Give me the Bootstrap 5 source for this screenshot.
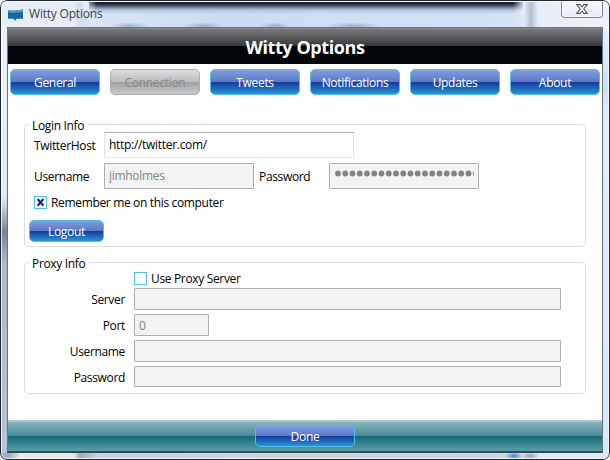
<!DOCTYPE html>
<html lang="en">
<head>
<meta charset="utf-8">
<meta name="viewport" content="width=device-width, initial-scale=1">
<title>Witty Options</title>
<link rel="stylesheet" href="https://cdn.jsdelivr.net/npm/bootstrap@5.3.0/dist/css/bootstrap.min.css">
<style>
body{width:610px;height:460px;background:#fff;font-family:"Open Sans","Noto Sans",sans-serif;font-size:12px;line-height:16px;color:#000;letter-spacing:-.34px}
.win{width:610px;height:460px;padding:1px 7px 7px;border-radius:7px;overflow:hidden;
background:
 radial-gradient(ellipse 9px 4px at 514px 456px,#3b86d6,transparent),
 radial-gradient(ellipse 9px 4px at 530px 456px,#94a2b0,transparent),
 linear-gradient(#fff,#fff) 0 26px/610px 1px no-repeat,
 linear-gradient(90deg,#9db0cc 0,#9db0cc 10px,#e2efec 20px,#dfeae6 74px,#a4adb5 80px,#c5d3e5 98px,#c8d7e8 500px,#dce9f8 540px) 0 453px/610px 7px no-repeat,
 linear-gradient(#e9f0fa 0,#e1ecfa 170px,#77849a 205px,#aab8cd 235px,#b8c4d8 100%) 0 27px/7px 426px no-repeat,
 linear-gradient(#e8f1fb,#cbdffa 60px,#e0eefc 90px,#d7e8fc) 603px 27px/7px 426px no-repeat,
 #e8eef7}
.win::after{content:"";position:absolute;left:0;top:0;width:610px;height:460px;border:1px solid #22272e;border-radius:7px;box-shadow:inset 0 0 0 1px rgba(255,255,255,.75);pointer-events:none}
.titlebar{height:26px;margin:0 -6px;padding:0 7px;color:#3c4148;
background:
 radial-gradient(ellipse 20px 4px at 128px 25px,rgba(110,130,160,.5),transparent),
 radial-gradient(ellipse 20px 4px at 202px 25px,rgba(110,130,160,.5),transparent),
 radial-gradient(ellipse 15px 4px at 274px 25px,rgba(110,130,160,.5),transparent),
 radial-gradient(ellipse 28px 4px at 352px 25px,rgba(110,130,160,.5),transparent),
 linear-gradient(#fff,#fff) 0 0/100% 1px no-repeat,
 linear-gradient(90deg,#e9eef5,rgba(233,238,245,0)) 82px 0/14px 13px no-repeat,
 linear-gradient(90deg,rgba(232,239,250,0),#e8effa) 512px 0/12px 13px no-repeat,
 linear-gradient(#141c2e,#1b2437 3px,#6b788d 6px,#b5c4d8 9px,rgba(200,215,235,0) 13px) 88px 0/434px 13px no-repeat,
 linear-gradient(90deg,transparent,#b4bfce,transparent) 523px 0/14px 26px no-repeat,
 linear-gradient(90deg,#e9eef5 0,#e6edf6 72px,#d3deec 78px,#d9e5f5 90px,#cbdcf2 220px,#d2e2f7 510px,#e6edf8 530px,#edf2fa 100%)}
.caption-text{letter-spacing:-.2px;padding:1px 0 0 6px}
.close-x{width:42px;height:17px;margin-right:-.5px;border:1px solid #7d8793;border-top:0;border-radius:0 0 4px 4px;background:linear-gradient(#f6f8fc,#e7edf6);box-shadow:inset 0 0 0 1px rgba(255,255,255,.7)}
.client{height:426px;border:1px solid #69717b;border-bottom:2px solid #3d464c;background:#fff}
.hero{height:36px;background:linear-gradient(#98989a 0,#77797b 1px,#36383b 18px,#000408 18px,#020509 100%);color:#fff;font-weight:700;font-size:18px;line-height:36px;letter-spacing:-.42px;padding-top:2px}
.tabs{gap:10px;padding:5px 2px 0}
.glossy{height:26px;width:90px;padding:2px 0 0;border:1px solid #55bde8;border-radius:5px;color:#fff;font-size:12px;line-height:1;letter-spacing:-.3px;background:linear-gradient(#7f9fdf 0,#5a78c4 50%,#17379c 50%,#2596d4 100%)}
.glossy:hover{color:#fff;border-color:#55bde8}
.glossy:disabled{opacity:1;color:#888;border-color:#acacac;background:linear-gradient(#dcdde0 0,#bbbcbf 50%,#9fa0a2 50%,#c9cacc 100%)}
.group{margin:0 16px;border:1px solid #d5dfe5;border-radius:4px;padding:0}
.group legend{font-size:12px;line-height:16px;margin:0 0 0 4px;padding:2px 4px 0 3px;height:16px}
.field{border:1px solid #abafb2;border-radius:1px;background:#f3f3f3;color:#838383;padding:0 4px 2px;font-size:12px;line-height:22px;height:26px;min-height:0;letter-spacing:-.3px}
.field:disabled{background:#f3f3f3;color:#838383}
.field.host{width:250px;background:#fff;color:#000;border-color:#abadb3 #e2e3ea #e3e9ef #e2e3ea}
.w150{width:150px}
.lab1{width:70px;padding-top:6px}
.lab2{width:100px;margin-right:9px;padding-top:4px}
.tick{width:13px;height:13px;border:1px solid #55bde8;background:#fff}
.tick-label{margin-left:4px;padding-top:2px}
.login{margin-top:21px;height:131px}
.proxy{margin-top:7px;height:140px}
.host-row,.user-row{height:31px;padding-left:9px}
.user-row .pw{margin-left:5px}
.remember{height:16px;padding-left:9px}
.use{height:16px;padding-left:109px;margin-bottom:2px}
.prow{height:26px}
.prow .field{height:22px;line-height:18px;padding-bottom:0}
.prow:last-child .field{height:21px}
.long{width:427px}
.port{width:75px}
.logout{width:75px;height:22px;margin:10px 0 0 4px}
.done{width:100px;height:22px;margin-top:5px}
.bottom{height:31px;background:linear-gradient(#b5c3cc 0,#b5c3cc 2px,#86b3bb 2px,#468b96 16px,#166679 16px,#57a0a8 100%)}
</style>
</head>
<body>
<div class="win position-relative">
  <header class="titlebar d-flex align-items-start">
    <svg class="mt-2" width="15" height="12" viewBox="0 0 15 12"><path d="M0 1.3Q7 2.3 15 .5V9.8H8.5L7 12 5.7 9.8H0Z" fill="#126b98"/><path d="M0 1.3Q7 2.3 15 .5V3Q7 4.5 0 3.2Z" fill="#4f9bbd"/></svg>
    <div class="caption-text flex-grow-1 mt-1">Witty Options</div>
    <div class="close-x d-flex justify-content-center align-items-center">
      <svg width="12" height="10" viewBox="0 0 12 10"><path d="M.7.6H4L6 3 8 .6h3.3L7.8 5l3.5 4.4H8L6 7 4 9.4H.7L4.2 5Z" fill="#fff" stroke="#50565f" stroke-width="1.1"/></svg>
    </div>
  </header>
  <main class="client d-flex flex-column">
    <div class="hero text-center d-flex justify-content-center align-items-center">Witty Options</div>
    <nav class="tabs d-flex">
      <button class="btn glossy">General</button>
      <button class="btn glossy" disabled>Connection</button>
      <button class="btn glossy">Tweets</button>
      <button class="btn glossy">Notifications</button>
      <button class="btn glossy">Updates</button>
      <button class="btn glossy">About</button>
    </nav>
    <fieldset class="group login">
      <legend class="float-none w-auto">Login Info</legend>
      <div class="host-row d-flex align-items-start"><label class="lab1">TwitterHost</label><input class="form-control field host" value="http://twitter.com/"></div>
      <div class="user-row d-flex align-items-start"><label class="lab1">Username</label><input class="form-control field w150" value="jimholmes" disabled><label class="lab1 pw">Password</label>
        <div class="field w150 overflow-hidden"><svg class="d-block" width="140" height="24"><path d="M4 9.5H152" stroke="#838383" stroke-width="5.8" stroke-linecap="round" stroke-dasharray="0 7.25"/></svg></div></div>
      <div class="remember d-flex align-items-center"><span class="tick d-flex"><svg width="11" height="11"><path d="M2.6 2 8.4 8.8M8.4 2 2.6 8.8" stroke="#182a92" stroke-width="2.1"/></svg></span><span class="tick-label">Remember me on this computer</span></div>
      <button class="btn glossy logout d-block">Logout</button>
    </fieldset>
    <fieldset class="group proxy">
      <legend class="float-none w-auto">Proxy Info</legend>
      <div class="use d-flex align-items-center"><span class="tick"></span><span class="tick-label">Use Proxy Server</span></div>
      <div class="prow d-flex"><label class="lab2 text-end">Server</label><input class="form-control field long" disabled></div>
      <div class="prow d-flex"><label class="lab2 text-end">Port</label><input class="form-control field port" value="0" disabled></div>
      <div class="prow d-flex"><label class="lab2 text-end">Username</label><input class="form-control field long" disabled></div>
      <div class="prow d-flex"><label class="lab2 text-end">Password</label><input class="form-control field long" disabled></div>
    </fieldset>
    <footer class="bottom mt-auto d-flex justify-content-center align-items-start"><button class="btn glossy done">Done</button></footer>
  </main>
</div>
<script src="https://cdn.jsdelivr.net/npm/bootstrap@5.3.0/dist/js/bootstrap.bundle.min.js"></script>
</body>
</html>
